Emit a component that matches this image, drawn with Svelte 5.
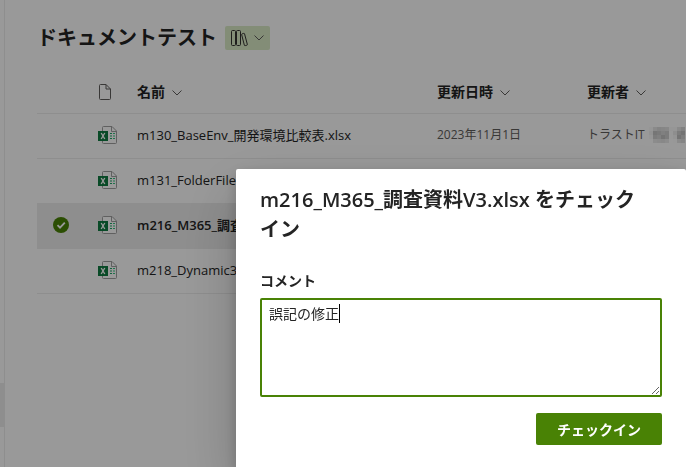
<script>
  const files = [
    { name: "m130_BaseEnv_開発環境比較表.xlsx", modified: "2023年11月1日", author: "トラストIT" },
    { name: "m131_FolderFile" },
    { name: "m216_M365_調査資料V3.xlsx", selected: true },
    { name: "m218_Dynamic365" },
  ];

  // Masked part of the author name, one grey level per tile
  const mask = [
    [150, 138, 132, 134, 136, 150, 150, 138, 130],
    [146, 118, 122, 128, 124, 152, 142, 124, 116],
    [150, 124, 128, 116, 124, 152, 148, 116, 126],
    [153, 140, 138, 136, 140, 153, 152, 138, 134],
  ];

  let comment = $state("誤記の修正");
</script>

{#snippet chevron()}
  <svg class="chevron" width="10" height="6" viewBox="0 0 10 6" fill="none" stroke="currentColor">
    <path d="M.5.5 5 5 9.500.5" />
  </svg>
{/snippet}

{#snippet excelIcon()}
  <svg class="file-icon" width="20" height="20" viewBox="0 0 20 20" fill="none">
    <path d="M5.500 1.500h8.500l4.500 4.500v11.500a1 1 0 0 1-1 1h-12a1 1 0 0 1-1-1v-15a1 1 0 0 1 1-1z" fill="#fff" stroke="#a0a0a0" />
    <path d="M13.500 1.500v5h5" stroke="#a0a0a0" />
    <path d="M12 8.500h2M12 11h2M12 13.500h2" stroke="#21a366" />
    <path d="M15 8.500h2M15 11h2M15 13.500h2" stroke="#33c481" />
    <rect y="6" width="10" height="10" fill="#107c41" />
    <path d="m3.200 8 3.600 6M6.800 8l-3.600 6" stroke="#fff" stroke-width="1.400" />
  </svg>
{/snippet}

<div class="page">
  <aside class="rail"><div class="rail-item"></div></aside>

  <main>
    <div class="title-bar">
      <h1>ドキュメントテスト</h1>
      <button class="view-btn" aria-label="ライブラリ">
        <svg width="17" height="17" viewBox="0 0 17 17" fill="none" stroke="currentColor">
          <rect x=".5" y=".5" width="4" height="15" rx="1" />
          <rect x="5.500" y=".5" width="4" height="15" rx="1" />
          <path d="m11.200 3.800 1.400-.4a.8.8 0 0 1 1 .6l2.700 10.300a.8.8 0 0 1-.6 1l-1.400.3a.8.8 0 0 1-1-.6l-2.600-10.200a.8.8 0 0 1 .5-1z" />
        </svg>
        {@render chevron()}
      </button>
    </div>

    <table>
      <thead>
        <tr>
          <th class="check-col"></th>
          <th class="icon-col">
            <svg class="doc-icon" width="14" height="16" viewBox="0 0 14 16" fill="none" stroke="currentColor">
              <path d="M2.500.5h5.500l4.500 4.500v9.500a1 1 0 0 1-1 1h-9a1 1 0 0 1-1-1v-13a1 1 0 0 1 1-1z" />
              <path d="M8 .5v4.500h4.500" />
            </svg>
          </th>
          <th class="name-col">名前{@render chevron()}</th>
          <th class="date-col">更新日時{@render chevron()}</th>
          <th>更新者{@render chevron()}</th>
        </tr>
      </thead>
      <tbody>
        {#each files as file}
          <tr class:selected={file.selected}>
            <td class="check-col">
              {#if file.selected}
                <svg class="check" width="16" height="16" viewBox="0 0 16 16" fill="none">
                  <circle cx="8" cy="8" r="8" fill="#498205" />
                  <path d="m4.500 8.200 2.500 2.500 4.800-5" stroke="#fff" stroke-width="1.800" />
                </svg>
              {/if}
            </td>
            <td class="icon-col">{@render excelIcon()}</td>
            <td class="name">{file.name}</td>
            <td class="meta">{file.modified ?? ""}</td>
            <td class="meta">
              {#if file.author}
                <div class="author">
                  {file.author}
                  <svg class="mask" width="36" height="16" viewBox="0 0 36 16" shape-rendering="crispEdges">
                    {#each mask as row, y}
                      {#each row as level, x}
                        <rect x={x * 4} y={y * 4} width="4" height="4" fill="#000" opacity={1 - level / 153} />
                      {/each}
                    {/each}
                  </svg>
                </div>
              {/if}
            </td>
          </tr>
        {/each}
      </tbody>
    </table>
  </main>
</div>

<div class="overlay">
  <div class="dialog" role="dialog" aria-modal="true" aria-labelledby="dialog-title">
    <h2 id="dialog-title">m216_M365_調査資料V3.xlsx をチェックイン</h2>
    <div class="body">
      <label for="comment">コメント</label>
      <div class="field">
        <textarea id="comment" bind:value={comment}></textarea>
        <span class="caret" style="left: calc(9px + {comment.length}em)"></span>
      </div>
      <div class="actions">
        <button class="primary">チェックイン</button>
      </div>
    </div>
  </div>
</div>

<style>
  :global(body) {
    margin: 0;
    overflow: hidden;
    background: #fff;
    color: #242424;
    font-family: "Open Sans", "Noto Sans CJK JP", sans-serif;
  }

  .page {
    display: flex;
    min-height: 100vh;
  }

  .rail {
    width: 4px;
    flex-shrink: 0;
    border-right: 1px solid #ededed;
  }

  .rail-item {
    height: 44px;
    margin-top: 383px;
    background: #ededed;
    margin-right: -1px;
  }

  main {
    flex: 1;
    min-width: 0;
    padding: 24px 0 0 32px;
  }

  .title-bar {
    display: flex;
    align-items: center;
    gap: 8px;
    height: 28px;
  }

  h1 {
    margin: 0;
    font-size: 20px;
    line-height: 28px;
    font-weight: 600;
  }

  .view-btn {
    display: flex;
    align-items: center;
    gap: 6px;
    height: 24px;
    padding: 0 6px;
    border: none;
    border-radius: 2px;
    background: #dbebc7;
    color: #323130;
  }

  .chevron {
    color: #605e5c;
  }

  table {
    width: 100%;
    margin-top: 16px;
    border-collapse: collapse;
    table-layout: fixed;
  }

  tr {
    height: 45px;
    border-bottom: 1px solid #ededed;
  }

  th,
  td {
    padding: 0;
    text-align: left;
    white-space: nowrap;
  }

  th {
    padding-top: 3px;
    font-size: 14px;
    line-height: 20px;
    font-weight: 600;
  }

  td {
    padding-bottom: 2px;
  }

  th .chevron {
    margin-left: 7px;
    vertical-align: middle;
  }

  .check-col {
    width: 48px;
    text-align: center;
  }

  .icon-col {
    width: 52px;
  }

  .name-col {
    width: 300px;
  }

  .date-col {
    width: 150px;
  }

  .doc-icon,
  .file-icon,
  .check {
    display: block;
  }

  .check {
    margin: 0 auto;
  }

  .doc-icon {
    margin-left: 13px;
    color: #605e5c;
  }

  .file-icon {
    margin-left: 13px;
  }

  .name {
    font-size: 13px;
    line-height: 20px;
  }

  .meta {
    font-size: 12px;
    line-height: 20px;
    color: #605e5c;
  }

  .author {
    display: flex;
    align-items: center;
    gap: 4px;
  }

  .mask {
    flex-shrink: 0;
  }

  .selected {
    background: #ededed;
  }

  .selected .name {
    font-weight: 600;
  }

  .overlay {
    position: fixed;
    inset: 0;
    display: flex;
    padding: 169px 0 0 236px;
    background: rgba(0, 0, 0, 0.4);
  }

  .dialog {
    flex: 1;
    min-width: 0;
    border-radius: 2px 2px 0 0;
    background: #fff;
    box-shadow:
      0 26px 58px rgba(0, 0, 0, 0.22),
      0 5px 14px rgba(0, 0, 0, 0.18);
  }

  h2 {
    margin: 0;
    padding: 16px 46px 24px 24px;
    font-size: 20px;
    line-height: 30px;
    font-weight: 600;
  }

  .body {
    padding: 0 24px 24px;
  }

  label {
    display: block;
    padding: 2px 0 7px;
    font-size: 14px;
    line-height: 20px;
    font-weight: 600;
  }

  .field {
    position: relative;
    font-size: 14px;
  }

  textarea {
    display: block;
    box-sizing: border-box;
    width: 100%;
    height: 99px;
    padding: 4px 7px;
    border: 2px solid #498205;
    border-radius: 2px;
    outline: none;
    background: #fff;
    color: #242424;
    font: inherit;
    line-height: 20px;
    resize: vertical;
  }

  .caret {
    position: absolute;
    top: 6px;
    width: 1px;
    height: 19px;
    background: #000;
  }

  .actions {
    display: flex;
    justify-content: flex-end;
    margin-top: 16px;
  }

  .primary {
    height: 32px;
    padding: 0 21px;
    border: none;
    border-radius: 2px;
    background: #498205;
    color: #fff;
    font-family: inherit;
    font-size: 14px;
    font-weight: 600;
  }
</style>
